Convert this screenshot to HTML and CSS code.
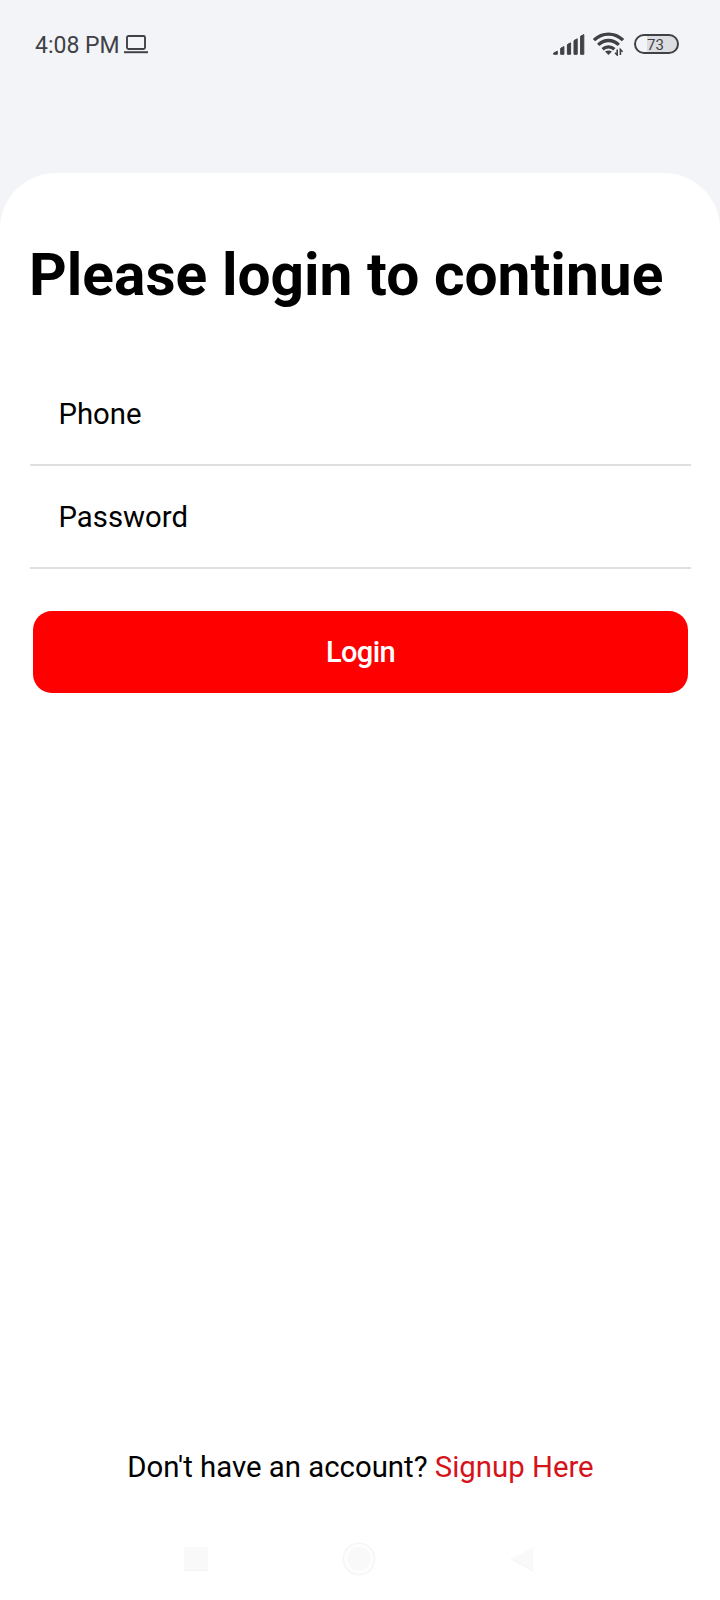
FILE: index.html
```
<!DOCTYPE html>
<html lang="en">
<head>
    <meta charset="UTF-8">
    <meta name="viewport" content="width=device-width, initial-scale=1.0">
    <title>Login</title>
    <link rel="stylesheet" href="styles.css">
</head>
<body>
    <div class="status">
        <div class="status-left">
            <span class="time">4:08 PM</span>
            <svg class="laptop" width="24" height="19" viewBox="0 0 24 19">
                <rect x="3" y="1" width="18" height="13" rx="1.5" fill="none" stroke="#404147" stroke-width="1.9"/>
                <path d="M0 17.2h24" stroke="#404147" stroke-width="2"/>
            </svg>
        </div>
        <div class="status-right">
            <svg class="signal" width="32" height="22" viewBox="0 0 32 22" fill="#404147" stroke="#404147" stroke-width="1" stroke-linejoin="round">
                <path d="M0.7 19L4.3 17.2V20.3H0.7z"/>
                <path d="M7.7 14.3L10.9 12.5V20.3H7.7z"/>
                <path d="M14.4 10.6L17.6 8.8V20.3H14.4z"/>
                <path d="M21 6.6L24.2 4.8V20.3H21z"/>
                <path d="M27.6 2.2L30.8 0.6V20.3H27.6z"/>
            </svg>
            <svg class="wifi" width="31" height="24" viewBox="0 0 31 24">
                <g fill="none" stroke="#404147" stroke-width="3.3">
                    <path d="M1 8.2C9.2 0 21.8 0 30 8.2"/>
                    <path d="M5.2 12.9C11.2 7 19.8 7 25.8 12.9"/>
                    <path d="M9.6 17.2C13 14 18 14 21.4 17.2"/>
                </g>
                <path d="M12 19.6Q15.5 17.4 19 19.6L15.5 23z" fill="#404147"/>
                <path d="M24.2 17.5v5.5l-2.2-2.2M27.4 23v-5.5l2.2 2.2" fill="none" stroke="#404147" stroke-width="1.6"/>
            </svg>
            <div class="battery"><span>73</span></div>
        </div>
    </div>
    <div class="card">
        <h1 class="title">Please login to continue</h1>
        <div class="form">
            <div class="field">Phone</div>
            <div class="field">Password</div>
            <button class="btn" type="button">Login</button>
        </div>
        <p class="signup">Don't have an account? <a class="link">Signup Here</a></p>
        <div class="nav">
            <svg width="24" height="25" viewBox="0 0 24 25">
                <rect width="24" height="24" fill="#f9f9f9"/>
                <path d="M0 23.5h24" stroke="#f3f3f3"/>
            </svg>
            <svg width="34" height="34" viewBox="0 0 34 34">
                <circle cx="17" cy="17" r="15.7" fill="#fdfdfd" stroke="#f6f6f6" stroke-width="1.6"/>
                <circle cx="17" cy="16.5" r="11.5" fill="#f9f9f9"/>
            </svg>
            <svg width="24" height="26" viewBox="0 0 24 26">
                <path d="M1 13L23 1v24z" fill="#f9f9f9"/>
                <path d="M1 13L23 25" stroke="#f3f3f3"/>
            </svg>
        </div>
    </div>
</body>
</html>
```
FILE: styles.css
```
*{
    margin: 0;
    padding: 0;
    box-sizing: border-box;
}
body{
    display: flex;
    flex-direction: column;
    height: 1600px;
    background: #f3f4f8;
    font-family: Roboto, "Liberation Sans", sans-serif;
    color: #000;
    overflow: hidden;
}
.status{
    display: flex;
    justify-content: space-between;
    height: 173px;
    padding: 32px 41px 0 35px;
    color: #404147;
}
.status-left,
.status-right{
    display: flex;
    align-items: center;
    height: 24px;
}
.time{
    padding-top: 3px;
    font-size: 23px;
    line-height: 26px;
}
.laptop{
    margin-left: 4px;
}
.signal{
    margin-top: 2px;
}
.wifi{
    margin-left: 8px;
}
.battery{
    width: 45px;
    height: 20px;
    margin-left: 10px;
    border: 2px solid #404147;
    border-radius: 10px;
    background: linear-gradient(to right, #f3f4f8 27%, #dcdde1 27%);
    font-size: 15px;
    line-height: 18px;
    text-align: center;
    text-indent: -2px;
}
.card{
    display: flex;
    flex-direction: column;
    flex: 1;
    padding: 69px 29px 0 30px;
    border-radius: 56px 56px 0 0;
    background: #fff;
}
.title{
    margin-left: -1px;
    font-size: 58.7px;
    line-height: 67px;
    white-space: nowrap;
}
.form{
    padding-top: 54px;
}
.field{
    height: 103px;
    padding-left: 28.5px;
    border-bottom: 2px solid #dfdfdf;
    font-size: 29.3px;
    line-height: 102px;
}
.btn{
    display: block;
    width: 655px;
    height: 82px;
    margin: 42px 0 0 3px;
    border: 0;
    border-radius: 19px;
    background: #f00;
    color: #fff;
    font-family: inherit;
    font-size: 29px;
    font-weight: 500;
    line-height: 82px;
    letter-spacing: -0.6px;
}
.signup{
    margin-top: auto;
    font-size: 29.35px;
    line-height: 36px;
    text-align: center;
}
.link{
    color: #d5131b;
}
.nav{
    display: flex;
    justify-content: space-between;
    align-items: center;
    height: 34px;
    margin: 57px 157px 24px 154px;
}
```
